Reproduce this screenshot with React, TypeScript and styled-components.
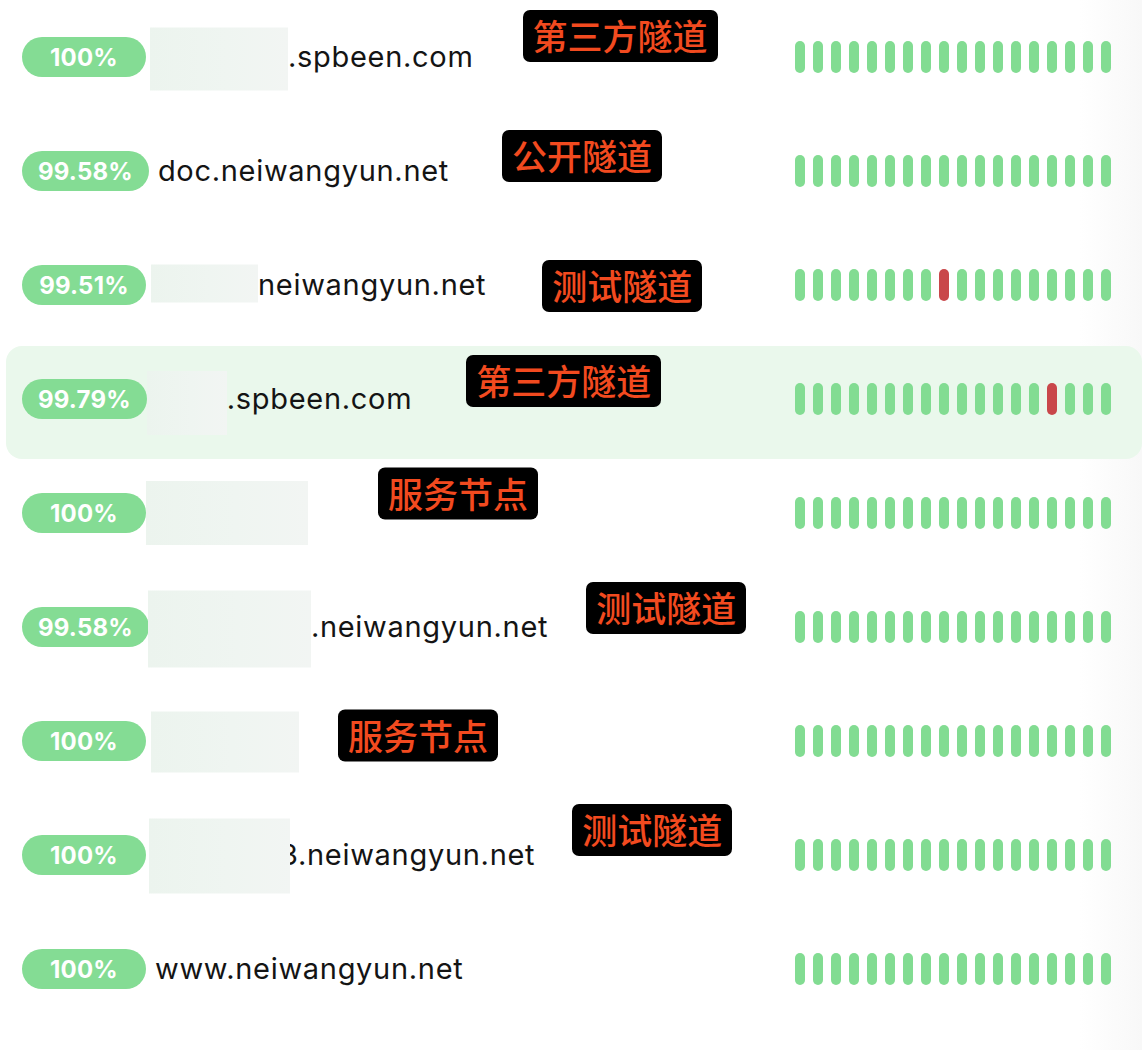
import React from "react";
import styled, { createGlobalStyle } from "styled-components";

const GlobalStyle = createGlobalStyle`
  html, body {
    margin: 0;
    padding: 0;
  }
  body {
    background: linear-gradient(90deg, #ffffff 0, #ffffff 1080px, #f8f8f8 1142px);
    font-family: Inter, "Noto Sans", "Noto Sans CJK SC", sans-serif;
    -webkit-font-smoothing: antialiased;
  }
`;

const List = styled.div`
  display: flex;
  flex-direction: column;
  margin-left: 6px;
  width: 1136px;
  min-height: 1050px;
`;

const Row = styled.div<{ $active?: boolean }>`
  position: relative;
  isolation: isolate;
  display: flex;
  align-items: center;
  height: 114px;
  padding: 0 31px 0 16px;
  box-sizing: border-box;

  &::before {
    content: "";
    position: absolute;
    left: 0;
    right: 0;
    top: 4px;
    bottom: -3px;
    border-radius: 16px;
    background: ${(p) => (p.$active ? "#eaf8ec" : "transparent")};
    z-index: -1;
  }
`;

const Badge = styled.span`
  flex: none;
  display: inline-flex;
  align-items: center;
  justify-content: center;
  box-sizing: border-box;
  min-width: 124px;
  height: 40px;
  padding: 0 16px;
  border-radius: 20px;
  background: #84dc94;
  color: #ffffff;
  font-family: Inter, "Noto Sans", sans-serif;
  font-weight: 700;
  font-size: 24px;
  letter-spacing: 0.2px;
`;

const Domain = styled.div<{ $offset: number }>`
  display: flex;
  align-items: center;
  margin-left: ${(p) => p.$offset}px;
`;

const Mask = styled.span<{ $w: number; $h: number; $dy: number; $overlap: number }>`
  position: relative;
  z-index: 1;
  flex: none;
  width: ${(p) => p.$w}px;
  height: ${(p) => p.$h}px;
  margin-right: ${(p) => -p.$overlap}px;
  transform: translateY(${(p) => p.$dy}px);
  background: linear-gradient(90deg, #ecf4ee 0%, #eff5f1 55%, #f2f5f3 100%);
`;

const Host = styled.span`
  font-family: Inter, "Noto Sans", sans-serif;
  font-size: 29px;
  font-weight: 400;
  color: #141414;
  white-space: nowrap;
  letter-spacing: 0.7px;
  transform: translateY(-1px);
`;

const Tag = styled.span<{ $gap: number; $dy: number }>`
  flex: none;
  display: inline-flex;
  align-items: center;
  box-sizing: border-box;
  height: 52px;
  padding: 0 10px 3px;
  margin-left: ${(p) => p.$gap}px;
  transform: translateY(${(p) => p.$dy}px);
  border-radius: 7px;
  background: #000000;
  color: #f24a1f;
  font-family: "Noto Sans CJK SC", "Noto Sans CJK JP", sans-serif;
  font-weight: 500;
  font-size: 35px;
  line-height: 1;
  letter-spacing: 0;
`;

const Spacer = styled.div`
  flex: 1;
`;

const Bars = styled.div`
  flex: none;
  display: flex;
  gap: 8px;
`;

const Bar = styled.span<{ $down?: boolean }>`
  width: 10px;
  height: 32px;
  border-radius: 5px;
  background: ${(p) => (p.$down ? "#c9474a" : "#82dc92")};
`;

type MaskSpec = { w: number; h: number; dy: number; overlap?: number };
type Item = {
  pct: string;
  offset: number;
  mask?: MaskSpec;
  host: string;
  tag?: { label: string; gap: number; dy: number };
  down?: number;
  active?: boolean;
};

const items: Item[] = [
  {
    pct: "100%",
    offset: 4,
    mask: { w: 138, h: 63, dy: 1.5 },
    host: ".spbeen.com",
    tag: { label: "第三方隧道", gap: 49, dy: -21 },
  },
  {
    pct: "99.58%",
    offset: 9,
    host: "doc.neiwangyun.net",
    tag: { label: "公开隧道", gap: 53, dy: -15 },
  },
  {
    pct: "99.51%",
    offset: 5,
    mask: { w: 107, h: 38, dy: -1.5 },
    host: "neiwangyun.net",
    tag: { label: "测试隧道", gap: 56, dy: 1 },
    down: 8,
  },
  {
    pct: "99.79%",
    offset: 0,
    mask: { w: 80, h: 64, dy: 4 },
    host: ".spbeen.com",
    tag: { label: "第三方隧道", gap: 54, dy: -18 },
    down: 14,
    active: true,
  },
  {
    pct: "100%",
    offset: 0,
    mask: { w: 162, h: 64, dy: 0 },
    host: "",
    tag: { label: "服务节点", gap: 70, dy: -19.5 },
  },
  {
    pct: "99.58%",
    offset: -1,
    mask: { w: 163, h: 77, dy: 1.5 },
    host: ".neiwangyun.net",
    tag: { label: "测试隧道", gap: 38, dy: -19 },
  },
  {
    pct: "100%",
    offset: 5,
    mask: { w: 148, h: 61, dy: 0.5 },
    host: "",
    tag: { label: "服务节点", gap: 39, dy: -5.5 },
  },
  {
    pct: "100%",
    offset: 3,
    mask: { w: 141, h: 75, dy: 0.5, overlap: 10 },
    host: "3.neiwangyun.net",
    tag: { label: "测试隧道", gap: 37, dy: -25 },
  },
  {
    pct: "100%",
    offset: 9,
    host: "www.neiwangyun.net",
  },
];

const BAR_COUNT = 18;

export default function App() {
  return (
    <>
      <GlobalStyle />
      <List>
        {items.map((it, i) => (
          <Row key={i} $active={it.active}>
            <Badge>{it.pct}</Badge>
            <Domain $offset={it.offset}>
              {it.mask && (
                <Mask
                  $w={it.mask.w}
                  $h={it.mask.h}
                  $dy={it.mask.dy}
                  $overlap={it.mask.overlap ?? 0}
                />
              )}
              {it.host && <Host>{it.host}</Host>}
            </Domain>
            {it.tag && (
              <Tag $gap={it.tag.gap} $dy={it.tag.dy}>
                {it.tag.label}
              </Tag>
            )}
            <Spacer />
            <Bars>
              {Array.from({ length: BAR_COUNT }, (_, b) => (
                <Bar key={b} $down={b === it.down} />
              ))}
            </Bars>
          </Row>
        ))}
      </List>
    </>
  );
}
